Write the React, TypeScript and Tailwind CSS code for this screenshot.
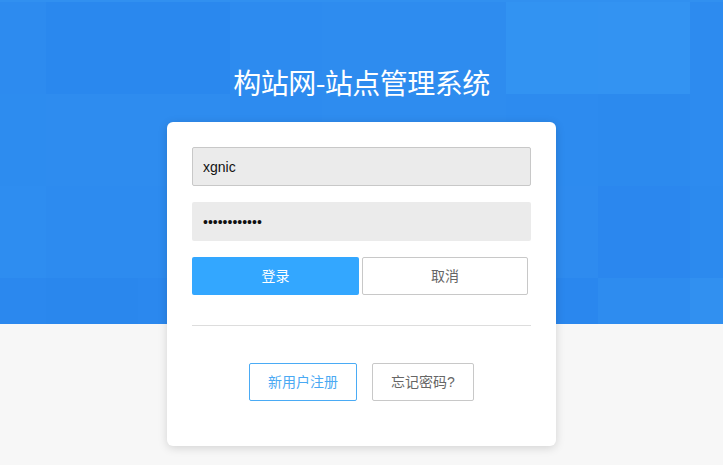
import React from "react";

const tiles: string[] = [
  // row 0 (-90..2)
  "#3190f0", "#3190f0", "#3190f0", "#3190f0", "#3190f0", "#3190f0", "#3190f0", "#3190f0", "#3190f0",
  // row 1 (2..94)
  "#2d8bef", "#2a88ee", "#2a88ee", "#2d8bef", "#2e8cef", "#2e8cef", "#3293f2", "#3393f2", "#2d8bef",
  // row 2 (94..186)
  "#2d8cef", "#2e8cef", "#2e8cef", "#2d8bef", "#2e8cef", "#2e8cef", "#2d8bef", "#2c8aee", "#2d8bef",
  // row 3 (186..278)
  "#2e8df0", "#2d8bef", "#2d8bef", "#2e8cef", "#2d8bef", "#2e8cef", "#2e8bef", "#2b87ee", "#2c8aee",
  // row 4 (278..370)
  "#2b88ee", "#2a87ed", "#2b88ee", "#2c89ee", "#2d8bef", "#2d8bef", "#2a87ee", "#2e8cef", "#3190f0",
];

export default function App() {
  return (
    <div
      className="relative w-full h-[465px] overflow-hidden bg-[#f7f7f7]"
      style={{ fontFamily: '"Liberation Sans", "Noto Sans CJK SC", sans-serif' }}
    >
      {/* blue mosaic band (decorative background) */}
      <div className="absolute top-0 left-0 right-0 h-[324px] overflow-hidden bg-[#2d8bef]">
        <div className="absolute left-[-46px] top-[-90px] grid grid-cols-[repeat(9,92px)] grid-rows-[repeat(5,92px)]">
          {tiles.map((c, i) => (
            <div key={i} style={{ backgroundColor: c }} />
          ))}
        </div>
      </div>

      <div className="relative flex flex-col items-center pt-[64px]">
        <h1
          className="text-white text-[28px] leading-[36px] font-normal tracking-[-0.5px]"
          style={{ fontFamily: '"Noto Sans CJK SC", sans-serif' }}
        >
          构站网-站点管理系统
        </h1>

        <div className="mt-[22px] w-[389px] bg-white rounded-[6px] shadow-[0_2px_10px_rgba(0,0,0,0.15)] px-[25px] pt-[25px] pb-[45px] flex flex-col">
          <input
            readOnly
            value="xgnic"
            className="h-[39px] w-full border border-[#c8c8c8] bg-[#ebebeb] rounded-[2px] px-[10px] text-[14px] text-[#111] outline-none"
          />
          <input
            readOnly
            type="password"
            value="xxxxxxxxxxxx"
            className="mt-[16px] h-[39px] w-full bg-[#ebebeb] rounded-[2px] px-[11px] text-[14px] text-[#111] outline-none"
          />
          <div className="mt-[16px] flex gap-[3px]">
            <button className="w-[167px] h-[38px] bg-[#33a7ff] rounded-[2px] text-white text-[14px]">
              登录
            </button>
            <button className="w-[166px] h-[38px] border border-[#c8c8c8] bg-white rounded-[2px] text-[#666] text-[14px]">
              取消
            </button>
          </div>
          <div className="mt-[30px] h-px bg-[#dddddd]" />
          <div className="mt-[37px] flex justify-center gap-[15px]">
            <button className="h-[38px] w-[108px] border border-[#4aabf5] rounded-[2px] text-[#4aa9f3] text-[14px] bg-white">
              新用户注册
            </button>
            <button className="h-[38px] w-[102px] border border-[#c8c8c8] rounded-[2px] text-[#666] text-[14px] bg-white">
              忘记密码?
            </button>
          </div>
        </div>
      </div>
    </div>
  );
}
